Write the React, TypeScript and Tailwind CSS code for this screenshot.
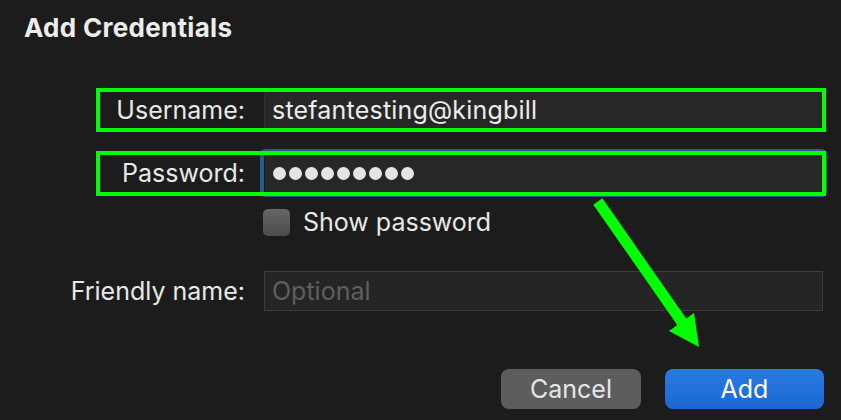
import React from "react";

const font = "font-['Inter','Liberation_Sans',sans-serif]";

const Dots = ({ count }: { count: number }) => (
  <div className="flex items-center gap-[3px]">
    {Array.from({ length: count }).map((_, i) => (
      <span key={i} className="w-[13px] h-[13px] rounded-full bg-[#e4e4e4]" />
    ))}
  </div>
);

const Annotations = () => (
  <svg
    className="absolute inset-0 pointer-events-none"
    width={841}
    height={420}
    viewBox="0 0 841 420"
  >
    <rect x={98} y={90} width={726} height={40} fill="none" stroke="#00ff00" strokeWidth={4} />
    <rect x={98} y={153} width={726} height={41} fill="none" stroke="#00ff00" strokeWidth={4} />
    <line x1={601} y1={206} x2={684} y2={325} stroke="#00ff00" strokeWidth={11} strokeLinecap="square" />
    <polygon points="699,347 694,313 669,331" fill="#00ff00" />
  </svg>
);

export default function App() {
  return (
    <div className={`relative w-[841px] h-[420px] bg-[#1c1c1c] overflow-hidden text-[#e8e8e8] leading-none ${font}`}>
      <h1 className="pl-[24px] pt-[12px] text-[26px] leading-[32px] font-bold tracking-[0.3px] text-[#ececec]">
        Add Credentials
      </h1>

      <div className="flex flex-col mt-[46px]">
        {/* Username */}
        <div className="flex items-center h-[40px]">
          <label className="w-[245px] text-right text-[25px]">Username:</label>
          <div className="ml-[19px] w-[559px] h-[40px] bg-[#272727] border border-[#303030] flex items-center px-[7px] text-[25px] tracking-[0.2px] text-[#ececec]">
            stefantesting@kingbill
          </div>
        </div>

        {/* Password */}
        <div className="flex items-center h-[40px] mt-[23px]">
          <label className="w-[245px] text-right text-[25px]">Password:</label>
          <div className="ml-[19px] w-[559px] h-[40px] bg-[#272727] border border-[#1a1a1a] ring-[4px] ring-[#285a8a] rounded-[2px] flex items-center px-[8px]">
            <Dots count={9} />
          </div>
        </div>

        {/* Show password */}
        <div className="flex items-center h-[27px] mt-[16px] ml-[263px]">
          <span className="w-[27px] h-[27px] rounded-[5px] bg-gradient-to-b from-[#666666] to-[#4c4c4c]" />
          <span className="ml-[13px] text-[25px]">Show password</span>
        </div>

        {/* Friendly name */}
        <div className="flex items-center h-[40px] mt-[35px]">
          <label className="w-[245px] text-right text-[25px]">Friendly name:</label>
          <div className="ml-[19px] w-[559px] h-[40px] bg-[#252525] border border-[#3c3c3c] flex items-center px-[7px] text-[25px] text-[#5f5f5f]">
            Optional
          </div>
        </div>

        {/* Buttons */}
        <div className="flex justify-end gap-[24px] pr-[17px] mt-[58px]">
          <button className="w-[140px] h-[40px] rounded-[8px] bg-[#5d5d5d] text-[25px] text-[#e6e6e6]">
            Cancel
          </button>
          <button className="w-[159px] h-[40px] rounded-[8px] bg-gradient-to-b from-[#2a7ae4] to-[#1c68d2] text-[25px] text-white">
            Add
          </button>
        </div>
      </div>

      <Annotations />
    </div>
  );
}
